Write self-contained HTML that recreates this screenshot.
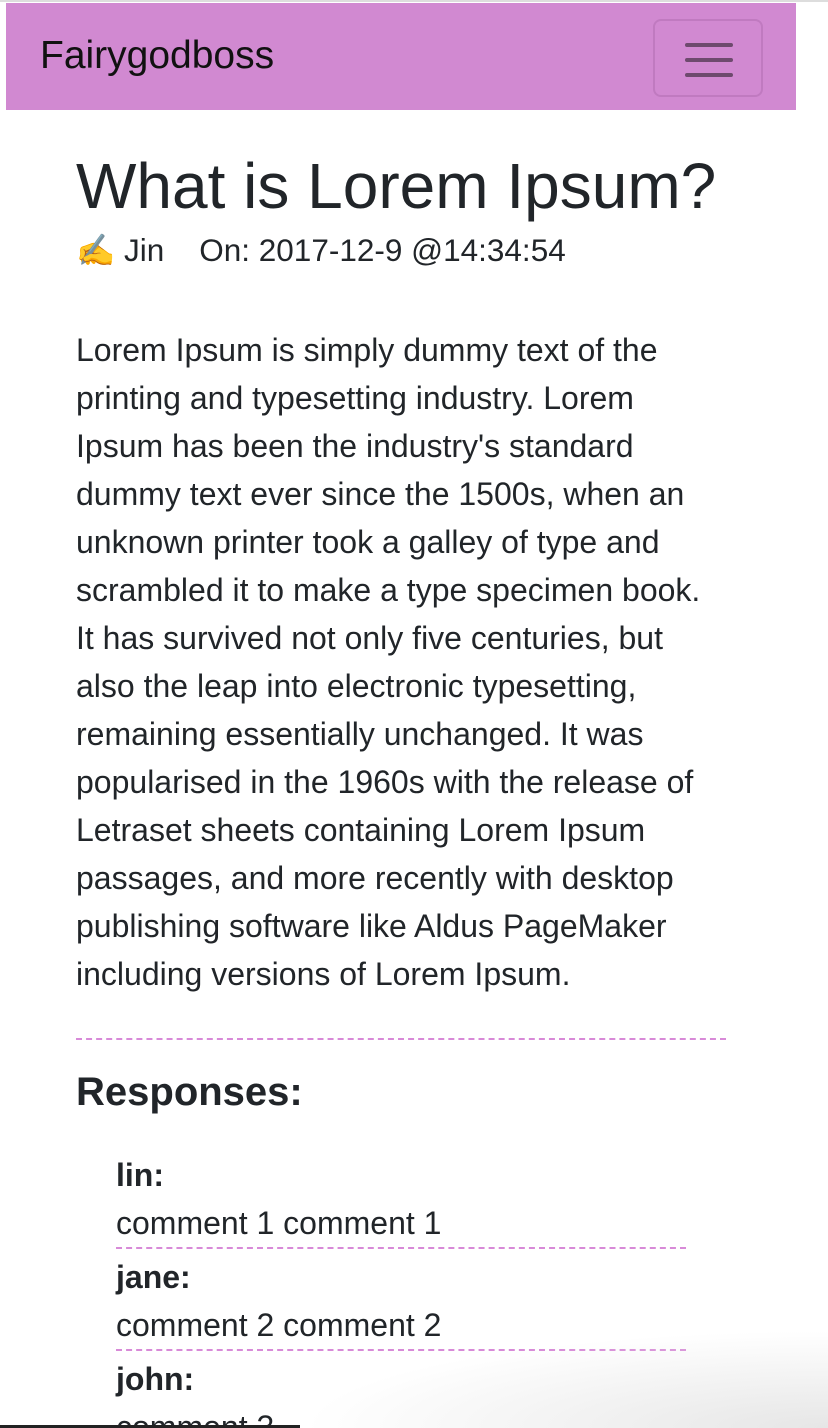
<!DOCTYPE html>
<html><head><meta charset="utf-8"><style>
*{margin:0;padding:0;box-sizing:border-box}
html,body{width:828px;height:1428px;overflow:hidden;background:#fff}
body{font-family:"Liberation Sans",Arial,sans-serif;color:#212529;position:relative}
.top{position:absolute;left:0;top:0;width:828px;height:2px;background:#ddd}
.nav{position:absolute;left:6px;top:3px;width:790px;height:107px;background:#d189d1}
.brand{position:absolute;left:34px;top:31px;font-size:39px;line-height:44px;color:#111}
.tog{position:absolute;left:647px;top:16px;width:110px;height:78px;border:2px solid #c07ac0;border-radius:8px}
.tog i{position:absolute;left:30px;width:48px;height:4px;border-radius:2px;background:#6e4a6e}
.a{position:absolute;left:76px}
h1{font-weight:normal;font-size:64px;line-height:72px;top:150px}
.meta{top:230px;font-size:31.5px;line-height:40px;white-space:nowrap}
.p{top:326px;font-size:32px;line-height:48px;white-space:nowrap}
.hr{position:absolute;border-top:2px dashed #d88ad8}
h2{top:1069px;font-size:40px;line-height:46px;font-weight:bold}
.c{position:absolute;left:116px;font-size:32px;line-height:48px;white-space:nowrap}
.b{font-weight:bold}
.bot{position:absolute;left:0;top:1425px;width:300px;height:3px;background:#222}
.sh{position:absolute;left:300px;top:1330px;width:528px;height:98px;background:radial-gradient(ellipse at 100% 100%,#e6e6e6,rgba(255,255,255,0) 70%)}
</style></head><body>
<div class="top"></div>
<div class="nav"><div class="brand">Fairygodboss</div>
<div class="tog"><i style="top:22px"></i><i style="top:37px"></i><i style="top:52px"></i></div></div>
<h1 class="a">What is Lorem Ipsum?</h1>
<div class="a meta">✍ Jin &nbsp;&nbsp; On: 2017-12-9 @14:34:54</div>
<div class="a p">Lorem Ipsum is simply dummy text of the<br>printing and typesetting industry. Lorem<br>Ipsum has been the industry's standard<br>dummy text ever since the 1500s, when an<br>unknown printer took a galley of type and<br>scrambled it to make a type specimen book.<br>It has survived not only five centuries, but<br>also the leap into electronic typesetting,<br>remaining essentially unchanged. It was<br>popularised in the 1960s with the release of<br>Letraset sheets containing Lorem Ipsum<br>passages, and more recently with desktop<br>publishing software like Aldus PageMaker<br>including versions of Lorem Ipsum.</div>
<div class="hr" style="left:76px;top:1038px;width:650px"></div>
<h2 class="a">Responses:</h2>
<div class="c b" style="top:1151px">lin:</div>
<div class="c" style="top:1199px">comment 1 comment 1</div>
<div class="hr" style="left:116px;top:1247px;width:570px"></div>
<div class="c b" style="top:1253px">jane:</div>
<div class="c" style="top:1301px">comment 2 comment 2</div>
<div class="hr" style="left:116px;top:1349px;width:570px"></div>
<div class="c b" style="top:1355px">john:</div>
<div class="c" style="top:1403px">comment 3</div>
<div class="sh"></div>
<div class="bot"></div>
</body></html>
